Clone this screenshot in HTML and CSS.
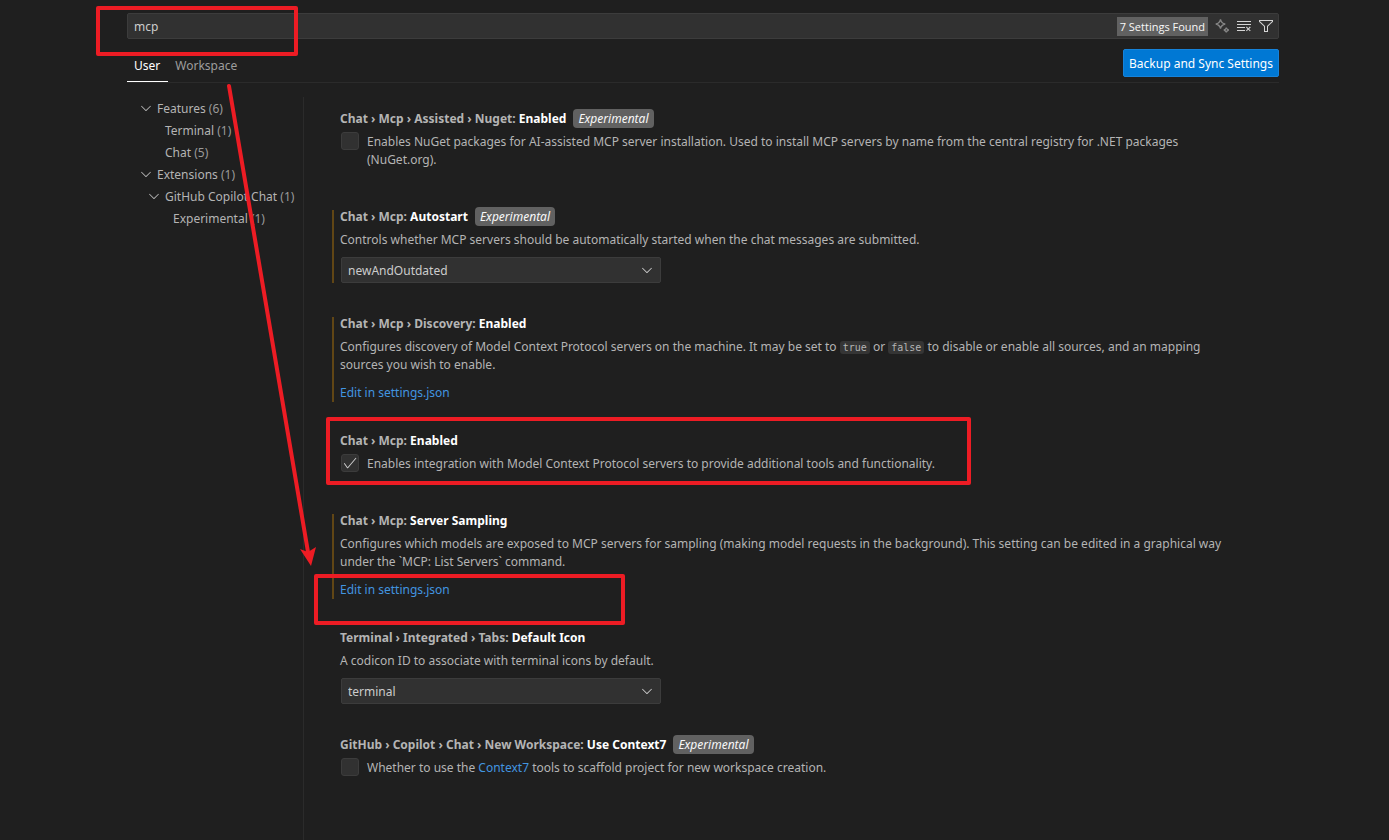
FILE: index.html
```html
<!DOCTYPE html>
<html lang="en">
<head>
<meta charset="utf-8">
<title>Settings</title>
<link rel="stylesheet" href="styles.css">
</head>
<body>
<svg class="sprite" aria-hidden="true">
  <symbol id="chevron" viewBox="0 0 16 16"><path d="M7.976 10.072l4.357-4.357.62.618L8.284 11h-.618L3 6.333l.619-.618 4.357 4.357z"/></symbol>
</svg>
<div class="editor">
  <header class="header">
    <div class="search">
      <input class="search-input" type="text" aria-label="Search settings" value="mcp">
      <span class="count">7 Settings Found</span>
      <div class="actions">
        <button class="icon-button dim" aria-label="Show AI results"><svg class="icon" viewBox="0 0 16 16"><path class="line" d="M6.500 1.300Q7.300 5.200 11.200 6Q7.300 6.800 6.500 10.700Q5.700 6.800 1.800 6Q5.700 5.200 6.500 1.300zM12.300 9.500Q12.700 11.600 14.800 12Q12.700 12.400 12.300 14.500Q11.900 12.400 9.800 12Q11.900 11.600 12.300 9.500z"/></svg></button>
        <button class="icon-button" aria-label="Clear search"><svg class="icon" viewBox="0 0 16 16"><path d="M10 12.6l.7.7 1.6-1.6 1.6 1.6.8-.7L13 11l1.700-1.600-.8-.8-1.600 1.700-1.600-1.700-.7.8 1.600 1.600-1.600 1.600zM1 4h14V3H1v1zm0 3h14V6H1v1zm8 2.500V9H1v1h8v-.5zM9 13v-1H1v1h8z"/></svg></button>
        <button class="icon-button" aria-label="Filter settings"><svg class="icon" viewBox="0 0 16 16"><path d="M15 2v1.670l-5 4.759V14H6V8.429l-5-4.760V2h14zM7 8v5h2V8l5-4.760V3H2v.24L7 8z"/></svg></button>
      </div>
    </div>
    <div class="tabs-row">
      <nav class="tabs">
        <button class="tab active">User</button>
        <button class="tab">Workspace</button>
      </nav>
      <button class="sync">Backup and Sync Settings</button>
    </div>
  </header>

  <div class="content">
    <nav class="tree" aria-label="Settings groups">
      <div class="node"><svg class="icon twistie"><use href="#chevron"/></svg><span class="name">Features <span class="num">(6)</span></span></div>
      <div class="node child"><span class="name">Terminal <span class="num">(1)</span></span></div>
      <div class="node child"><span class="name">Chat <span class="num">(5)</span></span></div>
      <div class="node"><svg class="icon twistie"><use href="#chevron"/></svg><span class="name">Extensions <span class="num">(1)</span></span></div>
      <div class="node nested"><svg class="icon twistie"><use href="#chevron"/></svg><span class="name">GitHub Copilot Chat <span class="num">(1)</span></span></div>
      <div class="node grandchild"><span class="name">Experimental <span class="num">(1)</span></span></div>
    </nav>

    <main class="settings">
      <section class="setting toggle">
        <h3 class="title"><span class="name">Chat › Mcp › Assisted › Nuget: <b>Enabled</b></span><span class="tag">Experimental</span></h3>
        <div class="check-row">
          <input class="check" type="checkbox" id="nuget">
          <label class="desc" for="nuget">Enables NuGet packages for AI-assisted MCP server installation. Used to install MCP servers by name from the central registry for .NET packages (NuGet.org).</label>
        </div>
      </section>

      <section class="setting modified">
        <h3 class="title"><span class="name">Chat › Mcp: <b>Autostart</b></span><span class="tag">Experimental</span></h3>
        <label class="desc" for="autostart">Controls whether MCP servers should be automatically started when the chat messages are submitted.</label>
        <div class="select-box">
          <select class="select" id="autostart"><option>newAndOutdated</option></select>
          <svg class="icon arrow"><use href="#chevron"/></svg>
        </div>
      </section>

      <section class="setting linked modified">
        <h3 class="title"><span class="name">Chat › Mcp › Discovery: <b>Enabled</b></span></h3>
        <p class="desc">Configures discovery of Model Context Protocol servers on the machine. It may be set to <code>true</code> or <code>false</code> to disable or enable all sources, and an mapping sources you wish to enable.</p>
        <a class="link edit" href="#">Edit in settings.json</a>
      </section>

      <section class="setting toggle">
        <h3 class="title"><span class="name">Chat › Mcp: <b>Enabled</b></span></h3>
        <div class="check-row">
          <input class="check" type="checkbox" id="enabled" checked>
          <label class="desc" for="enabled">Enables integration with Model Context Protocol servers to provide additional tools and functionality.</label>
        </div>
      </section>

      <section class="setting linked modified">
        <h3 class="title"><span class="name">Chat › Mcp: <b>Server Sampling</b></span></h3>
        <p class="desc">Configures which models are exposed to MCP servers for sampling (making model requests in the background). This setting can be edited in a graphical way under the `MCP: List Servers` command.</p>
        <a class="link edit" href="#">Edit in settings.json</a>
      </section>

      <section class="setting">
        <h3 class="title"><span class="name">Terminal › Integrated › Tabs: <b>Default Icon</b></span></h3>
        <label class="desc" for="icon">A codicon ID to associate with terminal icons by default.</label>
        <div class="select-box">
          <select class="select" id="icon"><option>terminal</option></select>
          <svg class="icon arrow"><use href="#chevron"/></svg>
        </div>
      </section>

      <section class="setting toggle">
        <h3 class="title"><span class="name">GitHub › Copilot › Chat › New Workspace: <b>Use Context7</b></span><span class="tag">Experimental</span></h3>
        <div class="check-row">
          <input class="check" type="checkbox" id="context7">
          <label class="desc" for="context7">Whether to use the <a class="link" href="#">Context7</a> tools to scaffold project for new workspace creation.</label>
        </div>
      </section>
    </main>
  </div>
</div>

<svg class="annotations" width="1389" height="840" viewBox="0 0 1389 840" aria-hidden="true">
  <g class="marks">
    <rect x="98" y="8" width="198" height="46"/>
    <rect x="328" y="419" width="641" height="64"/>
    <rect x="316" y="576" width="307" height="47"/>
    <path d="M229 86L308 552"/>
  </g>
  <path class="arrowhead" d="M311 566L300 549L308 552L316 547z"/>
</svg>
</body>
</html>
```
FILE: styles.css
```css
* { box-sizing: border-box; }

body {
  margin: 0;
  min-height: 100vh;
  padding: 13px 0 0 17px;
  background: #1f1f1f;
  color: #b4b4b4;
  font: 12px/18px "Noto Sans", "Open Sans", sans-serif;
}

button, input, select { font: inherit; color: inherit; }
button { border: 0; background: none; padding: 0; cursor: pointer; }
p, h3 { margin: 0; }

.sprite { display: none; }
.icon { display: block; width: 16px; height: 16px; fill: currentColor; flex: none; }
.line { fill: none; stroke: currentColor; stroke-width: 1.3; }

.editor { max-width: 1152px; margin: 0 auto; }

.search {
  display: flex;
  align-items: center;
  height: 26px;
  padding: 0 4px 0 6px;
  border: 1px solid #3c3c3c;
  border-radius: 2px;
  background: #313131;
}
.search-input {
  flex: 1;
  min-width: 0;
  padding: 2px 0 0;
  border: 0;
  outline: 0;
  background: none;
  color: #cccccc;
}
.count {
  padding: 1px 3px 0;
  background: #616161;
  color: #f8f8f8;
  font: 11px/18px "Open Sans", sans-serif;
}
.actions { display: flex; gap: 6px; margin-left: 6px; color: #d4d4d4; }
.dim { color: #858585; }

.tabs-row {
  display: flex;
  justify-content: space-between;
  align-items: flex-start;
  margin-top: 10px;
  border-bottom: 1px solid #2b2b2b;
}
.tabs { display: flex; }
.tab {
  height: 33px;
  padding: 2px 8px 0 7px;
  border-bottom: 1px solid transparent;
  color: #9d9d9d;
}
.tab.active { color: #ffffff; border-color: #ffffff; }
.sync {
  height: 28px;
  padding: 2px 5px 0;
  border: 1px solid #1683da;
  border-radius: 2px;
  background: #0078d4;
  color: #ffffff;
}

.content { display: flex; margin-top: 14px; }
.tree { flex: 0 0 176px; white-space: nowrap; }
.node { display: flex; align-items: center; gap: 3px; height: 22px; padding-left: 11px; }
.nested { padding-left: 19px; }
.child { padding-left: 38px; }
.grandchild { padding-left: 46px; }
.name { padding-top: 2px; }
.num { color: #9a9a9a; }

.settings {
  flex: 1;
  min-width: 0;
  min-height: calc(100vh - 97px);
  padding: 12px 40px 0 28px;
  border-left: 1px solid #2b2b2b;
}
.setting {
  display: flex;
  flex-direction: column;
  align-items: flex-start;
  position: relative;
  margin-bottom: 31px;
  padding-left: 8px;
}
.toggle { margin-bottom: 38px; }
.linked { margin-bottom: 29px; }
.modified::before {
  content: "";
  position: absolute;
  left: 0;
  top: 3px;
  bottom: 0;
  width: 2px;
  background: #614615;
}
.title {
  display: flex;
  align-items: center;
  gap: 7px;
  height: 18px;
  margin-bottom: 5px;
  font-size: 12px;
  font-weight: 700;
}
.title b { color: #ffffff; font-weight: 700; }
.desc { padding-top: 1px; }
.tag {
  padding: 1px 5px 0;
  border-radius: 4px;
  background: #616161;
  color: #f8f8f8;
  font-style: italic;
  font-weight: 400;
}
.link { color: #4295e0; text-decoration: none; }
.edit { margin-top: 10px; }
code {
  padding: 1px 3px;
  border-radius: 3px;
  background: #353535;
  font: 10px/13px "DejaVu Sans Mono", monospace;
}

.check-row { display: flex; gap: 8px; }
.check {
  appearance: none;
  flex: none;
  width: 18px;
  height: 18px;
  margin: 0 0 0 1px;
  border: 1px solid #3c3c3c;
  border-radius: 3px;
  background: #313131;
}
.check:checked {
  background: #313131 url("data:image/svg+xml,%3Csvg xmlns='http://www.w3.org/2000/svg' viewBox='0 0 16 16'%3E%3Cpath fill='%23cccccc' d='M14.431 3.323l-8.470 10-.79-.036-3.350-4.770.818-.574 2.978 4.240 8.051-9.506.764.646z'/%3E%3C/svg%3E") center / 16px;
}

.select-box { position: relative; width: 100%; max-width: 320px; margin: 8px 0 0 1px; }
.select {
  display: block;
  appearance: none;
  width: 100%;
  height: 26px;
  padding: 1px 6px 0;
  border: 1px solid #3c3c3c;
  border-radius: 2px;
  background: #313131;
  color: #cccccc;
}
.arrow { position: absolute; right: 6px; top: 5px; color: #cccccc; pointer-events: none; }

.annotations { position: absolute; left: 0; top: 0; pointer-events: none; }
.marks { fill: none; stroke: #ed1c24; stroke-width: 4; stroke-linecap: round; stroke-linejoin: round; }
.arrowhead { fill: #ed1c24; }
```
